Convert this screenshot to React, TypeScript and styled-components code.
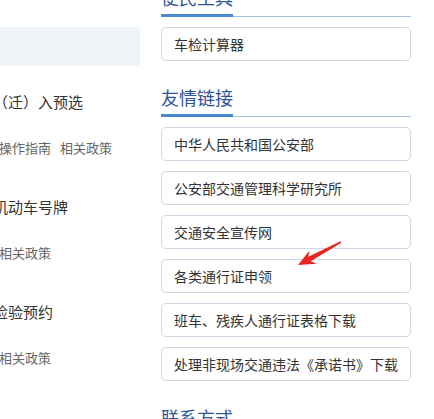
import React from "react";
import styled, { createGlobalStyle } from "styled-components";

const Global = createGlobalStyle`
  html, body { margin: 0; padding: 0; background: #fff; overflow: hidden; }
  body { font-family: "Noto Sans CJK SC", "Noto Sans", sans-serif; }
  a { text-decoration: none; color: inherit; }
`;

const Page = styled.div`
  position: relative;
  width: 434px;
  height: 419px;
  overflow: hidden;
  display: flex;
  align-items: flex-start;
`;

const LeftPane = styled.div`
  width: 140px;
  margin-right: 21px;
  padding-top: 27px;
  overflow: hidden;
  flex-shrink: 0;
`;

const SearchBar = styled.div`
  height: 39px;
  background: #eef3f8;
  border-radius: 0 4px 4px 0;
`;

const ServiceList = styled.div`
  margin-top: 26px;
  margin-left: -7px;
  display: flex;
  flex-direction: column;
  gap: 39px;
  width: 400px;
`;

const Service = styled.div`
  display: flex;
  flex-direction: column;
  gap: 26px;
`;

const ServiceTitle = styled.div`
  font-size: 15px;
  line-height: 20px;
  color: #333;
  white-space: nowrap;
`;

const ServiceLinks = styled.div`
  display: flex;
  gap: 9px;
  padding-left: 6px;
  font-size: 13px;
  line-height: 20px;
  color: #666;
  white-space: nowrap;
`;

const RightPane = styled.div`
  width: 250px;
  margin-top: -16px;
  flex-shrink: 0;
  display: flex;
  flex-direction: column;
`;

const Section = styled.section<{ $first?: boolean }>`
  margin-top: ${(p) => (p.$first ? 0 : 23)}px;
`;

const Heading = styled.h3`
  margin: 0 0 10px;
  border-bottom: 1px solid #a9c1e0;
  font-size: 18px;
  line-height: 26px;
  font-weight: normal;
  color: #2d5496;
  display: flex;
`;

const HeadingText = styled.span`
  display: block;
  width: 72px;
  white-space: nowrap;
  padding-bottom: 4px;
  margin-bottom: -1px;
  border-bottom: 3px solid #4a88d0;
`;

const LinkList = styled.div`
  display: flex;
  flex-direction: column;
  gap: 10px;
`;

const LinkBox = styled.a`
  box-sizing: border-box;
  height: 34px;
  display: flex;
  align-items: center;
  padding-left: 12px;
  border: 1px solid #ccd8e8;
  border-radius: 5px;
  font-size: 14px;
  color: #333;
  white-space: nowrap;
  background: #fff;
`;

const Arrow = styled.svg`
  position: absolute;
  left: 0;
  top: 0;
  pointer-events: none;
`;

const services = [
  { title: "（迁）入预选", links: ["操作指南", "相关政策"] },
  { title: "机动车号牌", links: ["相关政策"] },
  { title: "检验预约", links: ["相关政策"] },
];

const friends = [
  "中华人民共和国公安部",
  "公安部交通管理科学研究所",
  "交通安全宣传网",
  "各类通行证申领",
  "班车、残疾人通行证表格下载",
  "处理非现场交通违法《承诺书》下载",
];

export default function App() {
  return (
    <>
      <Global />
      <Page>
        <LeftPane>
          <SearchBar />
          <ServiceList>
            {services.map((s) => (
              <Service key={s.title}>
                <ServiceTitle>{s.title}</ServiceTitle>
                <ServiceLinks>
                  {s.links.map((l) => (
                    <a key={l} href="#">
                      {l}
                    </a>
                  ))}
                </ServiceLinks>
              </Service>
            ))}
          </ServiceList>
        </LeftPane>
        <RightPane>
          <Section $first>
            <Heading>
              <HeadingText>便民工具</HeadingText>
            </Heading>
            <LinkList>
              <LinkBox href="#">车检计算器</LinkBox>
            </LinkList>
          </Section>
          <Section>
            <Heading>
              <HeadingText>友情链接</HeadingText>
            </Heading>
            <LinkList>
              {friends.map((f) => (
                <LinkBox key={f} href="#">
                  {f}
                </LinkBox>
              ))}
            </LinkList>
          </Section>
          <Section>
            <Heading>
              <HeadingText>联系方式</HeadingText>
            </Heading>
          </Section>
        </RightPane>
        <Arrow width="434" height="419" viewBox="0 0 434 419">
          <polygon
            points="340.6,241.3 308.3,256.8 309.6,250.5 298,265 316.6,263.7 310.7,261.2 341.4,242.7"
            fill="#e8261f"
          />
        </Arrow>
      </Page>
    </>
  );
}
